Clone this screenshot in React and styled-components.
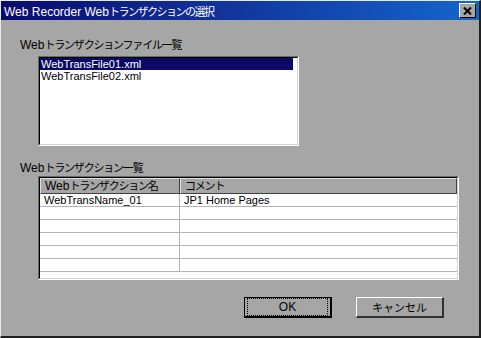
import React from "react";
import styled, { createGlobalStyle } from "styled-components";

const Global = createGlobalStyle`
  html, body { margin: 0; padding: 0; background: #a6a6a6; }
  body {
    font-family: "Liberation Sans", "Noto Sans CJK JP", sans-serif;
    font-size: 12px;
  }
`;

const Window = styled.div`
  width: 481px;
  height: 338px;
  box-sizing: border-box;
  background: #a6a6a6;
  border-left: 1px solid #e8e8e8;
  border-top: 1px solid #e8e8e8;
  border-right: 2px solid #202020;
  border-bottom: 2px solid #202020;
  display: flex;
  flex-direction: column;
`;

const TitleBar = styled.div`
  height: 19px;
  background: linear-gradient(90deg, #0a0a6e 0%, #10339a 45%, #1466cc 100%);
  color: #fff;
  display: flex;
  align-items: center;
  justify-content: space-between;
  padding: 0 3px 0 3px;
  font-size: 12px;
`;

const Jp = styled.span`
  font-family: "Noto Sans CJK JP", sans-serif;
  font-size: ${(p) => p.$size || 11}px;
  letter-spacing: ${(p) => p.$ls ?? -1.2}px;
`;

const CloseButton = styled.div`
  width: 17px;
  height: 15px;
  box-sizing: border-box;
  background: #a6a6a6;
  border-top: 1px solid #fff;
  border-left: 1px solid #fff;
  border-right: 1px solid #000;
  border-bottom: 1px solid #000;
  display: flex;
  align-items: center;
  justify-content: center;
`;

const Body = styled.div`
  flex: 1;
  display: flex;
  flex-direction: column;
  padding: 17px 0 0 19px;
`;

const Label = styled.div`
  color: #000;
  height: 16px;
  line-height: 14px;
`;

const Sunken = styled.div`
  margin-left: 18px;
  margin-top: ${(p) => p.$mt || 0}px;
  width: ${(p) => p.$w}px;
  height: ${(p) => p.$h}px;
  box-sizing: border-box;
  background: #fff;
  border-top: 1px solid #6a6a6a;
  border-left: 1px solid #6a6a6a;
  border-right: 1px solid #fff;
  border-bottom: 1px solid #fff;
`;

const SunkenInner = styled.div`
  height: 100%;
  box-sizing: border-box;
  border-top: 1px solid #000;
  border-left: 1px solid #000;
  border-right: 1px solid #d4d4d4;
  border-bottom: 1px solid #d4d4d4;
  overflow: hidden;
`;

const ListItem = styled.div`
  height: 12px;
  line-height: 12px;
  padding-left: 1px;
  font-size: 11px;
  color: ${(p) => (p.$sel ? "#fff" : "#000")};
  background: ${(p) => (p.$sel ? "#0a0a66" : "transparent")};
  margin-right: 4px;
`;

const Grid = styled.div`
  display: grid;
  grid-template-columns: 140px 1fr;
`;

const HeadCell = styled.div`
  height: 16px;
  box-sizing: border-box;
  background: #a6a6a6;
  border-top: 1px solid #e0e0e0;
  border-left: 1px solid #e0e0e0;
  border-right: 1px solid #404040;
  border-bottom: 1px solid #404040;
  padding-left: 4px;
  line-height: 13px;
  white-space: nowrap;
  overflow: hidden;
`;

const Cell = styled.div`
  height: 13px;
  box-sizing: border-box;
  border-bottom: 1px solid #b4b4b4;
  border-right: ${(p) => (p.$first ? "1px solid #b4b4b4" : "none")};
  padding-left: 4px;
  font-size: 11px;
  line-height: 12px;
  white-space: nowrap;
`;

const Buttons = styled.div`
  display: flex;
  justify-content: flex-end;
  gap: 24px;
  margin-top: 17px;
  padding-right: 35px;
`;

const Button = styled.div`
  width: 88px;
  height: 21px;
  box-sizing: border-box;
  background: #a6a6a6;
  font-size: 12px;
  display: flex;
  align-items: center;
  justify-content: center;
  border-top: 1px solid ${(p) => (p.$default ? "#000" : "#fff")};
  border-left: 1px solid ${(p) => (p.$default ? "#000" : "#fff")};
  border-right: ${(p) => (p.$default ? "2px solid #000" : "2px solid #303030")};
  border-bottom: ${(p) => (p.$default ? "2px solid #000" : "2px solid #303030")};
`;

const Focus = styled.div`
  width: 100%;
  height: 100%;
  margin: 2px;
  box-sizing: border-box;
  border: 1px dotted #000;
  display: flex;
  align-items: center;
  justify-content: center;
`;

const rows = [
  ["WebTransName_01", "JP1 Home Pages"],
  ["", ""],
  ["", ""],
  ["", ""],
  ["", ""],
  ["", ""],
];

export default function App() {
  return (
    <>
      <Global />
      <Window>
        <TitleBar>
          <span>
            Web Recorder Web<Jp $size={11} $ls={-1.5}>トランザクションの選択</Jp>
          </span>
          <CloseButton>
            <svg width="9" height="8" viewBox="0 0 9 8">
              <path d="M1 0.5 L8 7.5 M8 0.5 L1 7.5" stroke="#000" strokeWidth="2" />
            </svg>
          </CloseButton>
        </TitleBar>
        <Body>
          <Label>
            Web<Jp>トランザクションファイル一覧</Jp>
          </Label>
          <Sunken $w={261} $h={90} $mt={3}>
            <SunkenInner>
              <ListItem $sel>WebTransFile01.xml</ListItem>
              <ListItem>WebTransFile02.xml</ListItem>
            </SunkenInner>
          </Sunken>
          <div style={{ height: 14 }} />
          <Label>
            Web<Jp>トランザクション一覧</Jp>
          </Label>
          <Sunken $w={421} $h={104}>
            <SunkenInner>
              <Grid>
                <HeadCell>
                  Web<Jp>トランザクション名</Jp>
                </HeadCell>
                <HeadCell>
                  <Jp>コメント</Jp>
                </HeadCell>
                {rows.map((r, i) => (
                  <React.Fragment key={i}>
                    <Cell $first>{r[0]}</Cell>
                    <Cell>{r[1]}</Cell>
                  </React.Fragment>
                ))}
              </Grid>
            </SunkenInner>
          </Sunken>
          <Buttons>
            <Button $default>
              <Focus>OK</Focus>
            </Button>
            <Button>
              <Jp $size={11} $ls={0}>キャンセル</Jp>
            </Button>
          </Buttons>
        </Body>
      </Window>
    </>
  );
}
